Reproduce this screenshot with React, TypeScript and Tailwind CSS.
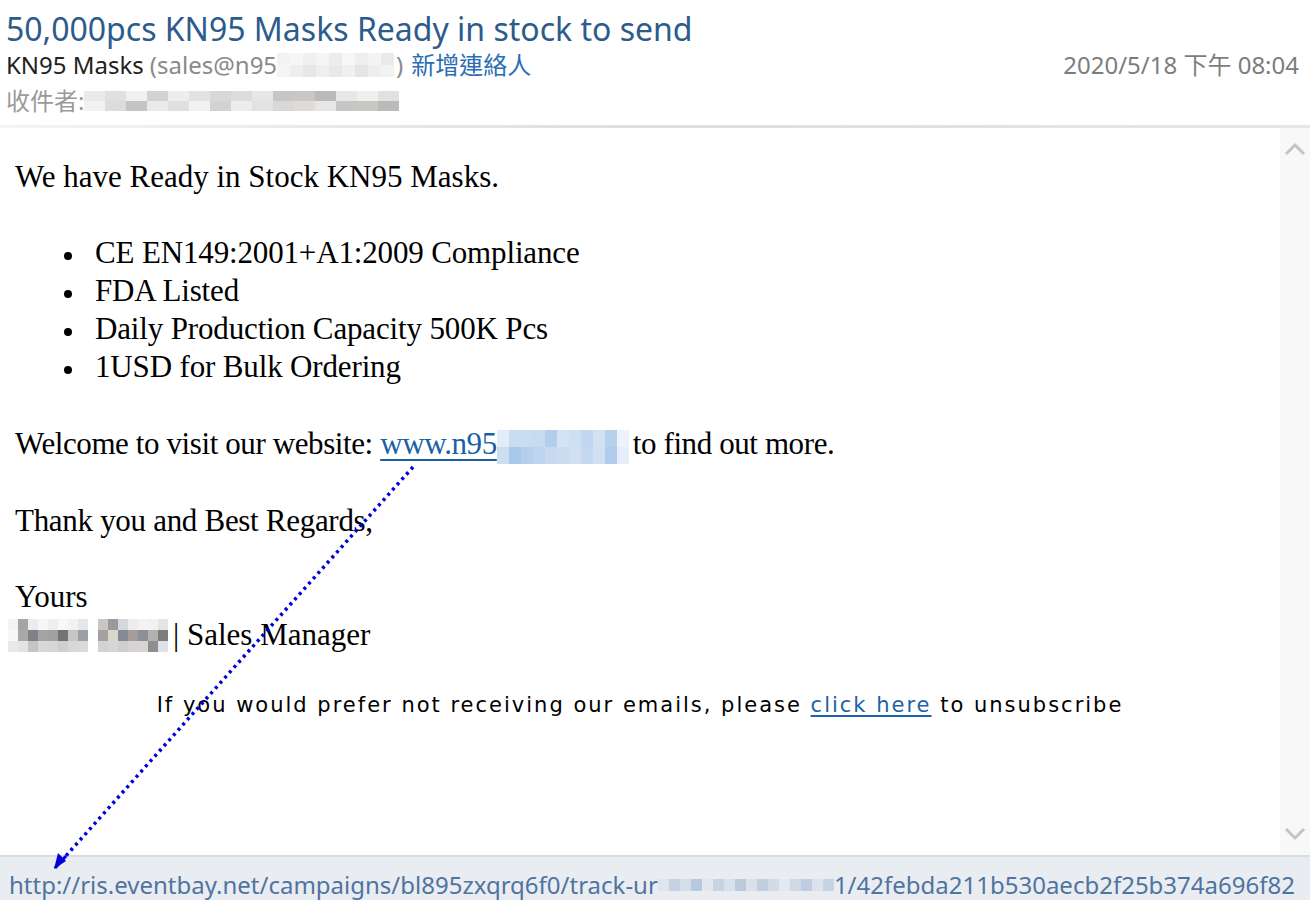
const grayCells = [
  "bg-[#e6e6e6]", "bg-[#d9d9d9]", "bg-[#eeeeee]", "bg-[#c8c8c8]", "bg-[#e9e9e9]", "bg-[#dcdcdc]",
  "bg-[#cfcfcf]", "bg-[#d6d3d1]", "bg-[#e0e0e0]", "bg-[#b9b9b9]", "bg-[#bdb8b4]", "bg-[#a9a9a9]",
  "bg-[#e3e3e3]", "bg-[#ececec]", "bg-[#dadada]", "bg-[#efefef]", "bg-[#d4d4d4]", "bg-[#b6b6b6]",
];

const lightCells = [
  "bg-[#f3f3f3]", "bg-[#f6f6f6]", "bg-[#f0f0f0]", "bg-[#f5f5f5]", "bg-[#ececec]", "bg-[#f7f7f7]",
  "bg-[#eeeeee]", "bg-[#f4f4f4]", "bg-[#eaeaea]",
  "bg-[#f5f5f5]", "bg-[#eeeeee]", "bg-[#e6e6e6]", "bg-[#efefef]", "bg-[#e8e8e8]", "bg-[#f0f0f0]",
  "bg-[#e5e5e5]", "bg-[#eeeeee]", "bg-[#f2f2f2]",
];

const darkCells = [
  "bg-[#f4f4f4]", "bg-[#a5a5a5]", "bg-[#ececec]", "bg-[#f6f6f6]", "bg-[#eeeeee]", "bg-[#f8f8f8]",
  "bg-[#f2f2f2]", "bg-[#e6e6e6]", "bg-white", "bg-[#cbc6c2]", "bg-[#9a9a9a]", "bg-[#d4d9e0]",
  "bg-[#ededed]", "bg-[#f3f3f3]", "bg-[#f1f1f1]", "bg-[#e4e4e4]",
  "bg-[#f7f7f7]", "bg-[#a8a8a8]", "bg-[#7e8288]", "bg-[#a3a3a3]", "bg-[#a0a0a0]", "bg-[#737373]",
  "bg-[#c9c5c1]", "bg-[#9aa0a6]", "bg-white", "bg-[#a1a1a1]", "bg-[#dcd5ca]", "bg-[#858b94]",
  "bg-[#a59d96]", "bg-[#8a9199]", "bg-[#b2b2b2]", "bg-[#7c7c7c]",
  "bg-[#ebe8e6]", "bg-[#e3e3e3]", "bg-[#c4c4c4]", "bg-[#d8d8d8]", "bg-[#d6d6d6]", "bg-[#cfcfcf]",
  "bg-[#d8d8d8]", "bg-[#dbdbdb]", "bg-white", "bg-[#d2d2d2]", "bg-[#d6d6d6]", "bg-[#cfcfcf]",
  "bg-[#d4d4d4]", "bg-[#d9d4cf]", "bg-[#8e8e8e]", "bg-[#dfe3e8]",
];

const blueCells = [
  "bg-[#e3edf8]", "bg-[#c9dcf1]", "bg-[#cadcf0]", "bg-[#c6daf0]", "bg-[#b3cdeb]", "bg-[#d4e3f4]",
  "bg-[#cddff2]", "bg-[#c2d7ef]", "bg-[#d2e2f3]", "bg-[#b9d0ec]", "bg-[#edf3fb]",
  "bg-[#ccdef2]", "bg-[#a9c7ea]", "bg-[#b5cfed]", "bg-[#bfd5ef]", "bg-[#c7daf1]", "bg-[#cbdcf1]",
  "bg-[#d1e1f3]", "bg-[#c4d8f0]", "bg-[#cfe0f3]", "bg-[#b0cbec]", "bg-[#e6eef9]",
];

const barCells = [
  "bg-[#dfe5ee]", "bg-[#c5d1e2]", "bg-[#d5dde9]", "bg-[#b9c9dc]", "bg-[#e2e8f0]", "bg-[#c7d3e3]",
  "bg-[#d8e0eb]", "bg-[#bccadc]", "bg-[#dae1ec]", "bg-[#c1cee0]", "bg-[#d2dbe8]", "bg-[#e4e9f1]",
  "bg-[#cfd9e6]", "bg-[#bfcde0]", "bg-[#dce3ed]", "bg-[#c8d4e4]",
];

function Mosaic({ cells, cols, cell, className = "" }: { cells: string[]; cols: string; cell: string; className?: string }) {
  return (
    <span className={`inline-grid ${cols} align-middle ${className}`}>
      {cells.map((c, i) => (
        <span key={i} className={`${cell} ${c}`} />
      ))}
    </span>
  );
}

function Chevron({ up }: { up?: boolean }) {
  return (
    <svg width="22" height="14" viewBox="0 0 22 14">
      <path
        d={up ? "M2 12 L11 3 L20 12" : "M2 2 L11 11 L20 2"}
        fill="none"
        stroke="#c4c4c4"
        strokeWidth="3"
      />
    </svg>
  );
}

export default function App() {
  const serif = "font-['Liberation_Serif',serif] text-[31px] leading-[38px] text-black";
  const ui = "font-['Noto_Sans','Noto_Sans_CJK_TC',sans-serif]";

  return (
    <div className="relative flex h-[900px] w-[1310px] flex-col overflow-hidden bg-white">
      {/* header */}
      <div className={`h-[125px] px-[6px] ${ui}`}>
        <div className="pt-[10px] text-[32px] leading-[38px] text-[#2d5b8b]">
          50,000pcs KN95 Masks Ready in stock to send
        </div>
        <div className="flex items-center justify-between pr-[12px] text-[24px] leading-[34px]">
          <div className="flex items-center">
            <span className="text-[#222]">KN95 Masks</span>
            <span className="ml-[6px] text-[#8a8a8a]">(sales@n95</span>
            <Mosaic cells={lightCells} cols="grid-cols-9" cell="h-[12px] w-[13px]" />
            <span className="ml-[2px] text-[#8a8a8a]">)</span>
            <span className="ml-[8px] text-[#2a6db5]">新增連絡人</span>
          </div>
          <span className="mr-[-7px] text-[#7d7d7d]">2020/5/18 下午 08:04</span>
        </div>
        <div className="flex items-center pt-[2px] text-[24px] leading-[34px] text-[#9a9a9a]">
          <span>收件者:</span>
          <Mosaic cells={[...grayCells, ...grayCells.slice(0, 12)]} cols="grid-cols-15" cell="h-[10px] w-[21px]" className="opacity-80" />
        </div>
      </div>
      <div className="h-[3px] bg-gradient-to-r from-[#f4f4f4] via-[#dedede] to-[#e6e6e6]" />

      {/* body */}
      <div className="flex min-h-0 flex-1">
        <div className="flex-1 pt-[30px]">
          <div className={`pl-[15px] ${serif}`}>
            <div>We have Ready in Stock KN95 Masks.</div>
            <div className="h-[38px]" />
            {[
              "CE EN149:2001+A1:2009 Compliance",
              "FDA Listed",
              "Daily Production Capacity 500K Pcs",
              "1USD for Bulk Ordering",
            ].map((t) => (
              <div key={t} className="flex items-center">
                <span className="ml-[49px] mr-[23px] mt-[5px] h-[8px] w-[8px] rounded-full bg-black" />
                <span className="tracking-[-0.15px]">{t}</span>
              </div>
            ))}
            <div className="h-[38px]" />
            <div className="flex items-center tracking-[-0.4px]">
              <span>Welcome to visit our website:&nbsp;</span>
              <span className="text-[#1b5fa6] underline decoration-[2px] underline-offset-[5px]">www.n95</span>
              <Mosaic cells={blueCells} cols="grid-cols-11" cell="h-[17px] w-[12px]" className="mr-[4px] mt-[6px]" />
              <span>to find out more.</span>
            </div>
            <div className="h-[38px]" />
            <div className="tracking-[-0.3px]">Thank you and Best Regards,</div>
            <div className="h-[38px]" />
            <div>Yours</div>
            <div className="-ml-[7px] flex items-center">
              <Mosaic cells={darkCells} cols="grid-cols-16" cell="h-[11px] w-[10px]" className="mr-[5px]" />
              <span>| Sales Manager</span>
            </div>
          </div>
          <div className="mt-[36px] text-center font-['DejaVu_Sans',sans-serif] text-[21px] leading-[30px] tracking-[2px] text-black">
            If you would prefer not receiving our emails, please{" "}
            <span className="text-[#1c62aa] underline underline-offset-[3px]">click here</span> to unsubscribe
          </div>
        </div>
        <div className="flex w-[30px] flex-col items-center justify-between bg-[#f8f8f8] py-[14px]">
          <Chevron up />
          <Chevron />
        </div>
      </div>

      {/* status bar */}
      <div className={`flex h-[45px] items-center border-t-[2px] border-[#d9dde3] bg-[#e9edf2] pl-[9px] pt-[12px] text-[24px] leading-[30px] text-[#5074a0] ${ui}`}>
        <span className="shrink-0">http://ris.eventbay.net/campaigns/bl895zxqrq6f0/track-ur</span>
        <Mosaic cells={barCells} cols="grid-cols-16" cell="h-[12px] w-[11px]" className="shrink-0" />
        <span className="shrink-0">1/42febda211b530aecb2f25b374a696f82</span>
      </div>

      {/* annotation arrow */}
      <svg className="pointer-events-none absolute left-0 top-0" width="1310" height="900">
        <line x1="413" y1="467" x2="64" y2="858" stroke="#0000dd" strokeWidth="3.5" strokeDasharray="3 4" />
        <path d="M54 869 L58 853 L66 861 Z" fill="#0000dd" />
        <line x1="55" y1="868" x2="66" y2="856" stroke="#0000dd" strokeWidth="3" />
      </svg>
    </div>
  );
}
